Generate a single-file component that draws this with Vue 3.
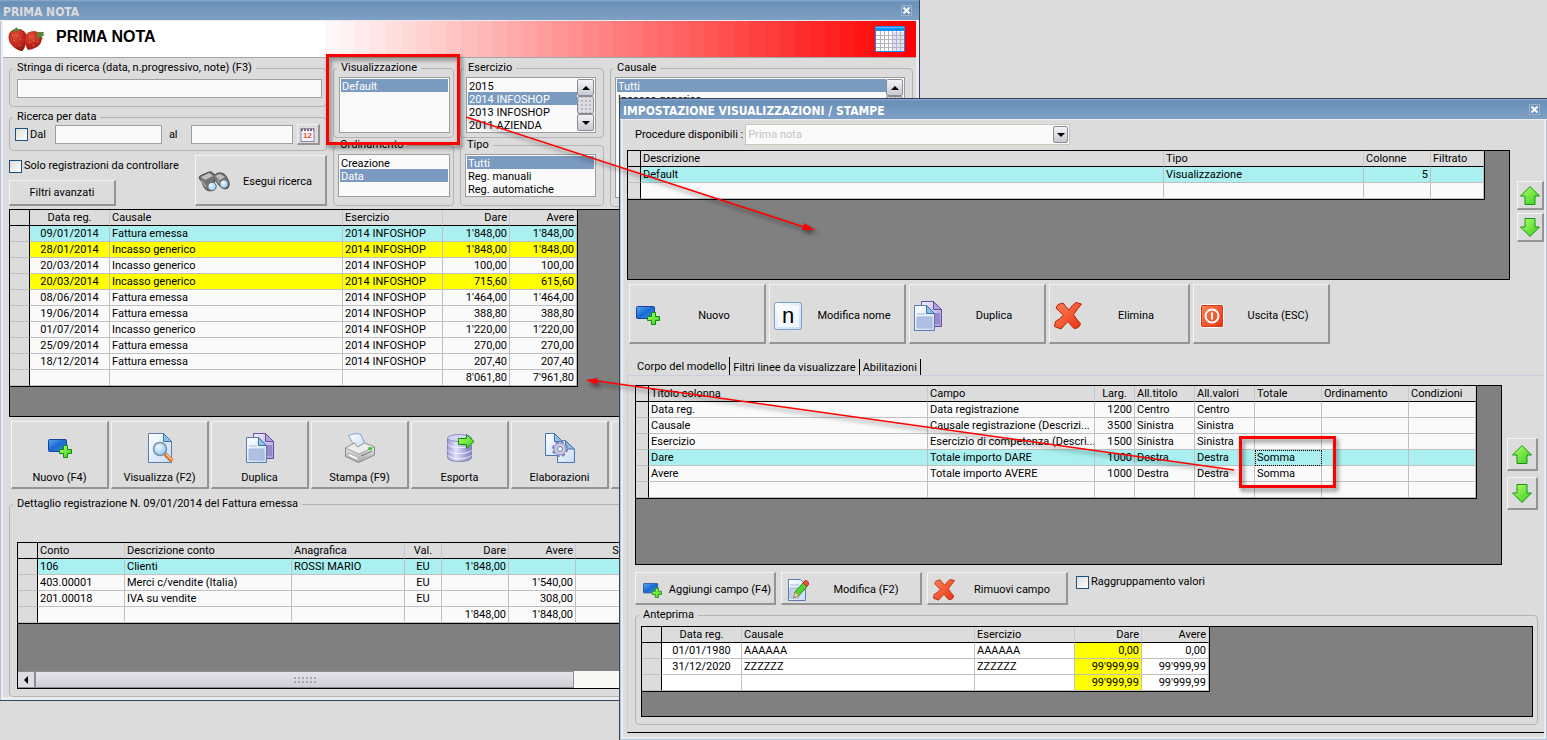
<template>
  <div class="desktop">
    <!-- shared icon definitions -->
    <svg class="defs" aria-hidden="true">
      <defs>
        <linearGradient id="gBlue" x1="0" y1="0" x2="1" y2="1">
          <stop offset="0" stop-color="#5aa8f0" />
          <stop offset="0.5" stop-color="#1a6ad0" />
          <stop offset="1" stop-color="#3a98f0" />
        </linearGradient>
        <linearGradient id="gGreen" x1="0" y1="0" x2="1" y2="1">
          <stop offset="0" stop-color="#b8ff6a" />
          <stop offset="1" stop-color="#34cc1c" />
        </linearGradient>
        <linearGradient id="gDoc" x1="0" y1="0" x2="1" y2="1">
          <stop offset="0" stop-color="#ffffff" />
          <stop offset="1" stop-color="#c4dcf4" />
        </linearGradient>
        <linearGradient id="gPurple" x1="0" y1="0" x2="1" y2="1">
          <stop offset="0" stop-color="#f4f0ff" />
          <stop offset="1" stop-color="#a898d8" />
        </linearGradient>
        <linearGradient id="gDb" x1="0" y1="0" x2="1" y2="0">
          <stop offset="0" stop-color="#9c9cd4" />
          <stop offset="0.35" stop-color="#e0e0fa" />
          <stop offset="1" stop-color="#7c7cbc" />
        </linearGradient>
        <linearGradient id="gRed" x1="0" y1="0" x2="1" y2="1">
          <stop offset="0" stop-color="#ff8458" />
          <stop offset="1" stop-color="#e83210" />
        </linearGradient>
        <linearGradient id="gGrey" x1="0" y1="0" x2="0" y2="1">
          <stop offset="0" stop-color="#f8f8f8" />
          <stop offset="1" stop-color="#a8a8a8" />
        </linearGradient>
        <radialGradient id="gLens" cx="0.4" cy="0.35" r="0.7">
          <stop offset="0" stop-color="#f0faff" />
          <stop offset="1" stop-color="#88c4f0" />
        </radialGradient>
        <radialGradient id="gBerry" cx="0.4" cy="0.3" r="0.8">
          <stop offset="0" stop-color="#e0503c" />
          <stop offset="0.6" stop-color="#bc2418" />
          <stop offset="1" stop-color="#84140c" />
        </radialGradient>
      </defs>
      <symbol id="new" viewBox="0 0 24 19">
        <rect x="0.5" y="0.5" width="18" height="12" rx="1" fill="url(#gBlue)" stroke="#1840a0" />
        <path d="M15.5 6.500h4v4h4v4h-4v4h-4v-4h-4v-4h4z" fill="url(#gGreen)" stroke="#0c8c0c" />
      </symbol>
      <symbol id="view" viewBox="0 0 30 30">
        <path d="M3.500 0.500h15l8 8v21h-23z" fill="url(#gDoc)" stroke="#5c7cb0" />
        <path d="M18.500 0.500v8h8z" fill="#8cc0e8" stroke="#4470a8" />
        <path d="M20 21l7 7" stroke="#d87020" stroke-width="4" />
        <path d="M21 21l6 6" stroke="#ffc080" stroke-width="1.500" />
        <circle cx="15" cy="16" r="6.500" fill="url(#gLens)" stroke="#7890a8" stroke-width="1.500" />
      </symbol>
      <symbol id="copy" viewBox="0 0 30 30">
        <path d="M8.500 0.500h12l8 8v17h-20z" fill="url(#gPurple)" stroke="#6450a0" />
        <path d="M20.500 0.500v8h8z" fill="#b0a0e0" stroke="#6450a0" />
        <path d="M20 12h7v11h-7z" fill="#9888c8" />
        <path d="M1.500 4.500h12l8 8v17h-20z" fill="url(#gDoc)" stroke="#5c7cb0" />
        <path d="M13.500 4.500v8h8z" fill="#8cc0e8" stroke="#4470a8" />
        <path d="M4 13h8M4 16h15v11h-15z" fill="#b0c0e4" stroke="#a4b8dc" />
      </symbol>
      <symbol id="print" viewBox="0 0 30 30">
        <path d="M3.500 2.500q7-3 12-1.500l4.500 10-9 5z" fill="url(#gDoc)" stroke="#7ca4d0" />
        <path d="M0.500 15l9-5 3 4 7-4 10 4v8l-16 7.500-13-6z" fill="url(#gGrey)" stroke="#888" />
        <path d="M0.500 15l9-5 3 4 7-4 10 4-15.500 7z" fill="#ececec" stroke="#a0a0a0" />
        <path d="M3 20l10 4.500v3l-10-4.500z" fill="#fff" stroke="#b0b0b0" />
        <path d="M16 23l11-5" stroke="#707070" />
        <ellipse cx="25" cy="15.500" rx="2" ry="1.500" fill="#28c828" />
      </symbol>
      <symbol id="db" viewBox="0 0 30 30">
        <path d="M2.500 5v19q0 4.500 12 4.500t12-4.500v-19z" fill="url(#gDb)" stroke="#8484b8" />
        <ellipse cx="14.500" cy="5" rx="12" ry="3.500" fill="#d4d4f0" stroke="#9090c4" />
        <path d="M2.500 11q2 3.500 12 3.500t12-3.500M2.500 17q2 3.500 12 3.500t12-3.500M2.500 22q2 3.500 12 3.500t12-3.500" fill="none" stroke="#f0f0ff" stroke-width="1" />
        <path d="M13.500 5.500h8v-4l7.500 7-7.500 7v-4h-8z" fill="url(#gGreen)" stroke="#108c10" />
      </symbol>
      <symbol id="gear" viewBox="0 0 30 30">
        <path d="M0.500 0.500h9l9 9v13h-18z" fill="url(#gDoc)" stroke="#4c74b0" />
        <path d="M12.500 18v11.500h17v-13l-9-9h-3z" fill="url(#gDoc)" stroke="#4c74b0" />
        <path d="M9.500 0.500v8h8zM20.500 8v8h9z" fill="#8cc0e8" stroke="#4470a8" />
        <circle cx="15" cy="16" r="6.500" fill="#c4c4e0" stroke="#8080ac" stroke-width="3" stroke-dasharray="3 2.100" />
        <circle cx="15" cy="16" r="6" fill="#c8c8e4" stroke="#9898c0" />
        <circle cx="15" cy="16" r="2.500" fill="#eef4ff" stroke="#7c7ca8" />
      </symbol>
      <symbol id="binoculars" viewBox="0 0 32 22">
        <path d="M1 7q0-2 3-3l7-3q2-1 5 2l1 1q3-3 6-2 3 0 5 3l3 6q1 3-1 6-3 2-6 0-4-3-5-6l-3-2q0 4 1 7-1 4-5 4-4 0-6-4-1-4-5-9z" fill="#747474" stroke="#484848" />
        <path d="M3 6l8-4 4 3-8 4zM17 5l5-2 5 3-5 3z" fill="#c0c0c0" />
        <path d="M3 9l5 7M19 8l3 5" stroke="#a0a0a0" stroke-width="1.500" />
        <circle cx="14" cy="15.500" r="4.200" fill="url(#gLens)" stroke="#606870" />
        <circle cx="26" cy="13" r="4.200" fill="url(#gLens)" stroke="#606870" />
      </symbol>
      <symbol id="rename" viewBox="0 0 28 28">
        <rect x="0.500" y="0.500" width="27" height="27" rx="2" fill="url(#gDoc)" stroke="#7c9cd0" />
        <rect x="4" y="4" width="21" height="21" fill="#fff" opacity="0.7" />
      </symbol>
      <symbol id="delete" viewBox="0 0 28 28">
        <path d="M4 2.500l5-1.500q3 4 6 7 3-5 7-7.500l5.500 1.500q-4 5-8 10.500 3 5 7 9-1 5-6.500 5-3-3-6-7-4 4-7 7.500l-6.500-2.500 1-5q4-2 8-6.500-5-4-7.500-7z" fill="url(#gRed)" stroke="#b82408" />
      </symbol>
      <symbol id="exit" viewBox="0 0 24 24">
        <rect x="0.500" y="0.500" width="23" height="23" rx="2" fill="url(#gRed)" stroke="#fff" />
        <rect x="1.500" y="1.500" width="21" height="21" rx="1" fill="none" stroke="#d83c18" />
        <circle cx="12" cy="12" r="6.500" fill="none" stroke="#fff" stroke-width="2" />
        <path d="M12 8.500v7" stroke="#fff" stroke-width="2" />
      </symbol>
      <symbol id="edit" viewBox="0 0 22 24">
        <path d="M1.500 1.500h12l5 5v16h-17z" fill="url(#gDoc)" stroke="#5c7cb0" />
        <path d="M3 7h9M3 10h9v10h-9z" fill="#c4d4ec" stroke="#a4b8dc" />
        <path d="M8 14l8-9 4 3.500-8 9-5 2z" fill="#54d42c" stroke="#1c8c14" />
        <path d="M16 5l2-2.500q4 0 3.500 4l-1.500 2z" fill="#e85038" stroke="#b83020" />
        <path d="M8 14l4 3.500-5.500 2.500z" fill="#f4d8a0" stroke="#a88850" />
      </symbol>
      <symbol id="up" viewBox="0 0 20 19">
        <path d="M10 0.500l9.500 9.500h-4.500v8.500h-10v-8.500h-4.500z" fill="url(#gGreen)" stroke="#149414" />
      </symbol>
      <symbol id="down" viewBox="0 0 20 19">
        <path d="M10 18.500l9.500-9.500h-4.500v-8.500h-10v8.500h-4.500z" fill="url(#gGreen)" stroke="#149414" />
      </symbol>
    </svg>

    <!-- main window -->
    <section class="window back">
      <header class="titlebar inactive">
        <h1>PRIMA NOTA</h1>
        <button class="close" aria-label="Chiudi">
          <svg width="7" height="7" viewBox="0 0 7 7"><path d="M0.500 0.500l6 6M6.500 0.500l-6 6" stroke="#fff" stroke-width="2" /></svg>
        </button>
      </header>

      <div class="banner">
        <div class="bands">
          <span v-for="n in 39" :key="n" :style="{ background: bandColor(n) }"></span>
        </div>
        <svg class="berry" width="38" height="25" viewBox="0 0 38 25">
          <path d="M0.500 10q0-7 8-8 10 0 10 8 0 9-4 14-5 0-10-5-4-4-4-9z" fill="url(#gBerry)" />
          <path d="M17 10q2-6 9-6 7 1 8 6 0 7-5 10-5 3-9 3-4-6-3-13z" fill="url(#gBerry)" />
          <path d="M4 3l3-1 1-2 2 2 4 0-2 2-3 0-3 1z" fill="#647c3c" />
          <path d="M29 5l3 0 4 0-1 2 2 1-3 1 1 3-3-2-2 2-1-3z" fill="#5c8434" />
          <path d="M4 8l1 1M9 8l1 1M6 13l1 1M12 12l1 1M11 18l1 1M21 9l1 1M25 13l1 1M21 15l1 1M25 18l1 1M29 14l1 1" stroke="#ec8468" />
        </svg>
        <h2>PRIMA NOTA</h2>
        <svg class="calendar" width="30" height="26" viewBox="0 0 30 26">
          <rect x="0.500" y="0.500" width="29" height="25" rx="1" fill="#fff" stroke="#0c8cf8" />
          <rect x="1" y="1" width="28" height="4" fill="#0c90f8" />
          <path d="M1 1.500h28" stroke="#68b8ff" />
          <path d="M18 6h11v19h-11z" fill="#d8d8fa" opacity="0.8" />
          <path d="M1 9.500h28M1 13.500h28M1 17.500h28M1 21.500h28M5.500 5v20M9.500 5v20M13.500 5v20M17.500 5v20M21.500 5v20M25.500 5v20" stroke="#b4b4c0" />
        </svg>
      </div>

      <div class="content">
        <div class="filters">
          <div class="search">
            <fieldset class="text-search">
              <legend><label for="stringa">Stringa di ricerca (data, n.progressivo, note) (F3)</label></legend>
              <input id="stringa" type="text" class="field" />
            </fieldset>
            <fieldset class="date-search">
              <legend>Ricerca per data</legend>
              <label class="check"><input type="checkbox" />Dal</label>
              <input type="text" class="field from" aria-label="Dal" />
              <label for="al">al</label>
              <input id="al" type="text" class="field to" />
              <button class="btn pick" aria-label="Calendario">
                <svg width="15" height="15" viewBox="0 0 15 15">
                  <rect x="1" y="1.500" width="13" height="13" fill="#f4f4ff" stroke="#8888b0" />
                  <path d="M1 3h13" stroke="#8c5c5c" stroke-width="2" stroke-dasharray="2 1" />
                  <text x="7.500" y="11" text-anchor="middle" font-family="Liberation Sans, sans-serif" font-weight="bold" font-size="8" fill="#f05008">12</text>
                </svg>
              </button>
            </fieldset>
            <div class="actions">
              <div class="extra">
                <label class="check"><input type="checkbox" />Solo registrazioni da controllare</label>
                <button class="btn advanced">Filtri avanzati</button>
              </div>
              <button class="btn side run">
                <span class="slot"><svg width="32" height="22"><use href="#binoculars" /></svg></span>
                <span class="label">Esegui ricerca</span>
              </button>
            </div>
          </div>

          <div class="stack">
            <fieldset class="upper">
              <legend>Visualizzazione</legend>
              <div class="list">
                <select size="4" aria-label="Visualizzazione"><option selected>Default</option></select>
              </div>
            </fieldset>
            <fieldset class="lower">
              <legend>Ordinamento</legend>
              <div class="list">
                <select size="3" aria-label="Ordinamento">
                  <option>Creazione</option>
                  <option selected>Data</option>
                </select>
              </div>
            </fieldset>
          </div>

          <div class="stack">
            <fieldset class="upper wide">
              <legend>Esercizio</legend>
              <div class="list">
                <select size="4" aria-label="Esercizio">
                  <option v-for="e in esercizi" :key="e" :selected="e === '2014 INFOSHOP'">{{ e }}</option>
                </select>
                <div class="scroll">
                  <button aria-label="Su"><i class="tri up"></i></button>
                  <span class="thumb"></span>
                  <button aria-label="Giù"><i class="tri down"></i></button>
                </div>
              </div>
            </fieldset>
            <fieldset class="lower wide">
              <legend>Tipo</legend>
              <div class="list">
                <select size="3" aria-label="Tipo">
                  <option selected>Tutti</option>
                  <option>Reg. manuali</option>
                  <option>Reg. automatiche</option>
                </select>
              </div>
            </fieldset>
          </div>

          <fieldset class="lower wide">
            <legend>Causale</legend>
            <div class="list">
              <select size="9" aria-label="Causale">
                <option selected>Tutti</option>
                <option>Incasso generico</option>
              </select>
              <div class="scroll">
                <button aria-label="Su"><i class="tri up"></i></button>
                <span class="thumb"></span>
                <button aria-label="Giù"><i class="tri down"></i></button>
              </div>
            </div>
          </fieldset>
        </div>

        <div class="grid-box main-box">
          <table :style="{ width: tableWidth(mainCols) }">
            <colgroup><col v-for="(c, i) in mainCols" :key="i" :style="{ width: c.w + 'px' }" /></colgroup>
            <thead>
              <tr><th v-for="(c, i) in mainCols" :key="i" :class="c.a">{{ c.t }}</th></tr>
            </thead>
            <tbody>
              <tr v-for="(r, i) in registrazioni" :key="i" :class="r[0]">
                <td v-for="(c, j) in mainCols" :key="j" :class="c.a">{{ j ? r[j] : '' }}</td>
              </tr>
            </tbody>
          </table>
        </div>

        <div class="toolbar">
          <button v-for="b in toolbar" :key="b.label" class="btn tool">
            <span class="picture"><svg :width="b.w" :height="b.h"><use :href="'#' + b.icon" /></svg></span>
            <span>{{ b.label }}</span>
          </button>
          <button class="btn tool" aria-label="Uscita"></button>
        </div>

        <fieldset class="detail">
          <legend>Dettaglio registrazione N. 09/01/2014 del Fattura emessa</legend>
          <div class="grid-box detail-box">
            <table :style="{ width: tableWidth(detailCols) }">
              <colgroup><col v-for="(c, i) in detailCols" :key="i" :style="{ width: c.w + 'px' }" /></colgroup>
              <thead>
                <tr><th v-for="(c, i) in detailCols" :key="i" :class="c.a">{{ c.t }}</th></tr>
              </thead>
              <tbody>
                <tr v-for="(r, i) in dettaglio" :key="i" :class="r[0]">
                  <td v-for="(c, j) in detailCols" :key="j" :class="c.a">{{ j ? r[j] : '' }}</td>
                </tr>
              </tbody>
            </table>
            <div class="hscroll">
              <button aria-label="Sinistra"><i class="tri left"></i></button>
              <span class="bar"><i class="grip"></i></span>
            </div>
          </div>
        </fieldset>
      </div>
    </section>

    <!-- settings window -->
    <section class="window front">
      <header class="titlebar">
        <h1>IMPOSTAZIONE VISUALIZZAZIONI / STAMPE</h1>
        <button class="close" aria-label="Chiudi">
          <svg width="7" height="7" viewBox="0 0 7 7"><path d="M0.500 0.500l6 6M6.500 0.500l-6 6" stroke="#fff" stroke-width="2" /></svg>
        </button>
      </header>

      <div class="content">
        <div class="procedure">
          <label for="procedure">Procedure disponibili :</label>
          <div class="combo">
            <select id="procedure" disabled><option>Prima nota</option></select>
            <span class="arrow"><i class="tri down"></i></span>
          </div>
        </div>

        <div class="with-side top-grid">
          <div class="grid-box">
            <table :style="{ width: tableWidth(viewCols) }">
              <colgroup><col v-for="(c, i) in viewCols" :key="i" :style="{ width: c.w + 'px' }" /></colgroup>
              <thead>
                <tr><th v-for="(c, i) in viewCols" :key="i" :class="c.a">{{ c.t }}</th></tr>
              </thead>
              <tbody>
                <tr v-for="(r, i) in viste" :key="i" :class="r[0]">
                  <td v-for="(c, j) in viewCols" :key="j" :class="c.a">{{ j ? r[j] : '' }}</td>
                </tr>
              </tbody>
            </table>
          </div>
          <div class="movers">
            <button class="btn" aria-label="Sposta su"><svg width="20" height="19"><use href="#up" /></svg></button>
            <button class="btn" aria-label="Sposta giù"><svg width="20" height="19"><use href="#down" /></svg></button>
          </div>
        </div>

        <div class="commands">
          <button v-for="b in commands" :key="b.label" class="btn side" :class="{ long: b.icon === 'delete' }">
            <span class="slot">
              <svg :width="b.w" :height="b.h">
                <use :href="'#' + b.icon" />
                <text v-if="b.icon === 'rename'" class="letter" x="14" y="21" text-anchor="middle">n</text>
              </svg>
            </span>
            <span class="label">{{ b.label }}</span>
          </button>
        </div>

        <div class="tabs" role="tablist">
          <button role="tab" aria-selected="true" class="active">Corpo del modello</button>
          <button role="tab" aria-selected="false">Filtri linee da visualizzare</button>
          <button role="tab" aria-selected="false">Abilitazioni</button>
        </div>

        <div class="panel">
          <div class="with-side model-grid">
            <div class="grid-box">
              <table :style="{ width: tableWidth(modelCols) }">
                <colgroup><col v-for="(c, i) in modelCols" :key="i" :style="{ width: c.w + 'px' }" /></colgroup>
                <thead>
                  <tr><th v-for="(c, i) in modelCols" :key="i" :class="c.a">{{ c.t }}</th></tr>
                </thead>
                <tbody>
                  <tr v-for="(r, i) in modello" :key="i" :class="r[0]">
                    <td v-for="(c, j) in modelCols" :key="j" :class="[c.a, { focus: i === 3 && j === 6 }]">{{ j ? r[j] : '' }}</td>
                  </tr>
                </tbody>
              </table>
            </div>
            <div class="movers">
              <button class="btn" aria-label="Sposta su"><svg width="20" height="19"><use href="#up" /></svg></button>
              <button class="btn" aria-label="Sposta giù"><svg width="20" height="19"><use href="#down" /></svg></button>
            </div>
          </div>

          <div class="field-actions">
            <button v-for="b in fieldActions" :key="b.label" class="btn side small">
              <span class="slot"><svg :width="b.w" :height="b.h"><use :href="'#' + b.icon" /></svg></span>
              <span class="label">{{ b.label }}</span>
            </button>
            <label class="check group-check"><input type="checkbox" />Raggruppamento valori</label>
          </div>

          <fieldset class="preview">
            <legend>Anteprima</legend>
            <div class="grid-box">
              <table :style="{ width: tableWidth(mainCols) }">
                <colgroup><col v-for="(c, i) in mainCols" :key="i" :style="{ width: c.w + 'px' }" /></colgroup>
                <thead>
                  <tr><th v-for="(c, i) in mainCols" :key="i" :class="c.a">{{ c.t }}</th></tr>
                </thead>
                <tbody>
                  <tr v-for="(r, i) in anteprima" :key="i">
                    <td v-for="(c, j) in mainCols" :key="j" :class="[c.a, { mark: j === 4 }]">{{ j ? r[j] : '' }}</td>
                  </tr>
                </tbody>
              </table>
            </div>
          </fieldset>
        </div>
      </div>
    </section>

    <!-- callouts -->
    <svg class="callouts" aria-hidden="true">
      <g fill="none" stroke="#ff0000">
        <rect x="327.500" y="55.500" width="131" height="88" stroke-width="3" />
        <rect x="1240.500" y="437.500" width="94" height="49" stroke-width="3" />
        <path d="M466 117L804 227" stroke-width="1.500" />
        <path d="M1234 470L597 381" stroke-width="1.500" />
      </g>
      <path d="M815 230l-10.500-7-2.500 7z" fill="#ff0000" />
      <path d="M586 380l11.500-2-1 7z" fill="#ff0000" />
    </svg>
  </div>
</template>

<script setup>
const esercizi = ['2015', '2014 INFOSHOP', '2013 INFOSHOP', '2011 AZIENDA']

// t = title, w = width, a = alignment
const mainCols = [
  { t: '', w: 20 },
  { t: 'Data reg.', w: 80, a: 'center' },
  { t: 'Causale', w: 233 },
  { t: 'Esercizio', w: 100 },
  { t: 'Dare', w: 67, a: 'right' },
  { t: 'Avere', w: 67, a: 'right' }
]

// first item of each row is its css class
const registrazioni = [
  ['current', '09/01/2014', 'Fattura emessa', '2014 INFOSHOP', "1'848,00", "1'848,00"],
  ['warn', '28/01/2014', 'Incasso generico', '2014 INFOSHOP', "1'848,00", "1'848,00"],
  ['', '20/03/2014', 'Incasso generico', '2014 INFOSHOP', '100,00', '100,00'],
  ['warn', '20/03/2014', 'Incasso generico', '2014 INFOSHOP', '715,60', '615,60'],
  ['', '08/06/2014', 'Fattura emessa', '2014 INFOSHOP', "1'464,00", "1'464,00"],
  ['', '19/06/2014', 'Fattura emessa', '2014 INFOSHOP', '388,80', '388,80'],
  ['', '01/07/2014', 'Incasso generico', '2014 INFOSHOP', "1'220,00", "1'220,00"],
  ['', '25/09/2014', 'Fattura emessa', '2014 INFOSHOP', '270,00', '270,00'],
  ['', '18/12/2014', 'Fattura emessa', '2014 INFOSHOP', '207,40', '207,40'],
  ['', '', '', '', "8'061,80", "7'961,80"]
]

const toolbar = [
  { label: 'Nuovo (F4)', icon: 'new', w: 24, h: 19 },
  { label: 'Visualizza (F2)', icon: 'view', w: 30, h: 30 },
  { label: 'Duplica', icon: 'copy', w: 30, h: 30 },
  { label: 'Stampa (F9)', icon: 'print', w: 30, h: 30 },
  { label: 'Esporta', icon: 'db', w: 30, h: 30 },
  { label: 'Elaborazioni', icon: 'gear', w: 30, h: 30 }
]

const detailCols = [
  { t: '', w: 20 },
  { t: 'Conto', w: 87 },
  { t: 'Descrizione conto', w: 167 },
  { t: 'Anagrafica', w: 113 },
  { t: 'Val.', w: 37, a: 'center' },
  { t: 'Dare', w: 67, a: 'right' },
  { t: 'Avere', w: 67, a: 'right' },
  { t: 'Saldo', w: 67, a: 'right' }
]

const dettaglio = [
  ['current', '106', 'Clienti', 'ROSSI MARIO', 'EU', "1'848,00", '', '0,00'],
  ['', '403.00001', 'Merci c/vendite (Italia)', '', 'EU', '', "1'540,00", ''],
  ['', '201.00018', 'IVA su vendite', '', 'EU', '', '308,00', ''],
  ['', '', '', '', '', "1'848,00", "1'848,00", '']
]

const viewCols = [
  { t: '', w: 13 },
  { t: 'Descrizione', w: 523 },
  { t: 'Tipo', w: 200 },
  { t: 'Colonne', w: 67, a: 'number' },
  { t: 'Filtrato', w: 53 }
]

const viste = [
  ['current', 'Default', 'Visualizzazione', '5', ''],
  ['', '', '', '', '']
]

const commands = [
  { label: 'Nuovo', icon: 'new', w: 24, h: 19 },
  { label: 'Modifica nome', icon: 'rename', w: 28, h: 28 },
  { label: 'Duplica', icon: 'copy', w: 30, h: 30 },
  { label: 'Elimina', icon: 'delete', w: 28, h: 28 },
  { label: 'Uscita (ESC)', icon: 'exit', w: 24, h: 24 }
]

const modelCols = [
  { t: '', w: 13 },
  { t: 'Titolo colonna', w: 279 },
  { t: 'Campo', w: 167 },
  { t: 'Larg.', w: 40, a: 'number mid' },
  { t: 'All.titolo', w: 60 },
  { t: 'All.valori', w: 60 },
  { t: 'Totale', w: 67 },
  { t: 'Ordinamento', w: 87 },
  { t: 'Condizioni', w: 67 }
]

const modello = [
  ['', 'Data reg.', 'Data registrazione', '1200', 'Centro', 'Centro', '', '', ''],
  ['', 'Causale', 'Causale registrazione (Descrizi...', '3500', 'Sinistra', 'Sinistra', '', '', ''],
  ['', 'Esercizio', 'Esercizio di competenza (Descri...', '1500', 'Sinistra', 'Sinistra', '', '', ''],
  ['current', 'Dare', 'Totale importo DARE', '1000', 'Destra', 'Destra', 'Somma', '', ''],
  ['', 'Avere', 'Totale importo AVERE', '1000', 'Destra', 'Destra', 'Somma', '', ''],
  ['', '', '', '', '', '', '', '', '']
]

const fieldActions = [
  { label: 'Aggiungi campo (F4)', icon: 'new', w: 19, h: 15 },
  { label: 'Modifica (F2)', icon: 'edit', w: 22, h: 24 },
  { label: 'Rimuovi campo', icon: 'delete', w: 22, h: 22 }
]

const anteprima = [
  ['', '01/01/1980', 'AAAAAA', 'AAAAAA', '0,00', '0,00'],
  ['', '31/12/2020', 'ZZZZZZ', 'ZZZZZZ', "99'999,99", "99'999,99"],
  ['', '', '', '', "99'999,99", "99'999,99"]
]

const tableWidth = (cols) => cols.reduce((sum, c) => sum + c.w, 1) + 'px'

// white to red in hard steps
const bandColor = (n) => {
  const v = Math.round(255 - (n / 39) * 255)
  return `rgb(255, ${v}, ${v})`
}
</script>

<style>
body {
  margin: 0;
  background: #dcdcdc;
}
</style>

<style scoped>
.desktop {
  position: relative;
  min-height: 100vh;
  overflow: hidden;
  background: #dcdcdc;
  color: #000;
  font-family: Roboto, sans-serif;
  font-size: 11px;
  line-height: 14px;
}

.desktop * {
  box-sizing: border-box;
}

button,
input,
select {
  margin: 0;
  color: inherit;
  font: inherit;
}

svg {
  display: block;
  flex: none;
}

.defs {
  position: absolute;
  width: 0;
  height: 0;
}

/* windows */
.window {
  position: absolute;
  background: #dcdcdc;
}

.back {
  top: 0;
  left: 0;
  width: 920px;
  border: solid #34465c;
  border-width: 0 1px 1px 0;
  box-shadow: inset 1px 0 #b0c4dc, inset -3px -3px #ececf0, inset 3px 0 #ececf0;
}

.front {
  top: 98px;
  left: 619px;
  right: 0;
  border: solid #34465c;
  border-width: 1px 0 0 1px;
  box-shadow: inset 1px 0 #b0c4dc, inset -1px -1px #b0c4dc, inset 3px 0 #ececf0, inset -3px -3px #ececf0;
}

.titlebar {
  display: flex;
  align-items: center;
  justify-content: space-between;
  height: 21px;
  padding: 4px 7px 0 3px;
  background: linear-gradient(#8cacd0 0, #6a90b8 2px, #7fa0c4 100%);
  border-bottom: 1px solid #ececf0;
  color: #fff;
}

.titlebar h1 {
  margin: 0;
  font-family: "DejaVu Sans Condensed", "DejaVu Sans", sans-serif;
  font-size: 12px;
  line-height: 16px;
  font-weight: bold;
}

.titlebar.inactive {
  color: #dcdcdc;
}

.close {
  display: flex;
  align-items: center;
  justify-content: center;
  width: 11px;
  height: 11px;
  margin-bottom: 3px;
  padding: 0;
  border: 1px solid #98b2d0;
  background: #7092b8;
}

.banner {
  position: relative;
  display: flex;
  align-items: center;
  height: 37px;
  margin: 0 3px;
  padding: 0 11px 0 5px;
  background: #fff;
  border-bottom: 1px solid #a4a4a4;
}

.banner h2 {
  flex: 1;
  margin: 0 0 4px 10px;
  font-family: "Liberation Sans", sans-serif;
  font-size: 16px;
  line-height: 22px;
  font-weight: bold;
}

.banner svg,
.banner h2 {
  z-index: 1;
}

.bands {
  position: absolute;
  inset: 0 0 0 322px;
  display: flex;
}

.bands span {
  flex: 1;
}

/* group boxes */
fieldset {
  min-width: 0;
  margin: 0;
  border: 1px solid #b4b4b4;
  border-radius: 4px;
}

legend {
  margin-left: -2px;
  padding: 0 4px;
  height: 14px;
}

.back .content {
  padding: 3px 6px 3px 9px;
}

.filters {
  display: grid;
  grid-template-columns: 318px 121px 144px 1fr;
  gap: 6px;
}

.search,
.stack {
  display: flex;
  flex-direction: column;
}

.text-search {
  padding: 4px 4px 8px 7px;
}

.text-search legend,
.detail legend {
  margin-left: -4px;
}

.field {
  width: 100%;
  height: 19px;
  padding: 0 3px;
  border: 1px solid #a0a0a0;
  background: #fafafa;
}

.text-search .field {
  display: block;
}

.date-search {
  display: flex;
  align-items: center;
  margin-top: 3px;
  padding: 0 6px 5px 5px;
}

.date-search .from {
  width: 107px;
  margin: 0 7px 0 9px;
}

.date-search .to {
  width: 102px;
  margin: 0 4px 0 13px;
}

.check {
  display: flex;
  align-items: center;
  gap: 2px;
}

.check input {
  appearance: none;
  width: 13px;
  height: 13px;
  border: 1px solid #1c5180;
  background: linear-gradient(135deg, #dcdcd8, #fff);
}

.btn {
  display: flex;
  align-items: center;
  justify-content: center;
  padding: 0;
  border: solid;
  border-width: 1px 2px 2px 1px;
  border-color: #f4f4f4 #949494 #949494 #f4f4f4;
  background: #dcdcdc;
}

.pick {
  width: 23px;
  height: 21px;
}

.actions {
  display: flex;
  justify-content: space-between;
  margin-top: 4px;
}

.extra {
  display: flex;
  flex-direction: column;
  justify-content: space-between;
  padding-top: 4px;
}

.advanced {
  width: 107px;
  height: 26px;
}

.side {
  justify-content: flex-start;
  width: 137px;
  height: 60px;
  padding: 4px 0 0 2px;
}

.slot {
  display: flex;
  flex: none;
  justify-content: center;
  width: 32px;
}

.label {
  flex: 1;
  text-align: center;
}

.letter {
  font-family: "Liberation Sans", sans-serif;
  font-size: 22px;
}

.run {
  width: 132px;
  height: 51px;
}

.upper {
  padding: 2px 3px 4px 5px;
}

.lower {
  display: flex;
  padding: 2px 3px 8px 4px;
}

.wide {
  padding-right: 7px;
}

.list {
  display: flex;
  flex: 1;
  border: 1px solid #9c9c9c;
  background: #fafafa;
  padding: 1px;
}

.upper .list {
  height: 56px;
}

.stack .lower .list {
  height: 43px;
}

.list select {
  flex: 1;
  min-width: 0;
  height: 100%;
  padding: 0;
  border: 0;
  border-radius: 0;
  outline: 0;
  background: transparent;
  overflow: hidden;
  scrollbar-width: none;
}

.list option {
  height: 13px;
  min-height: 13px;
  padding: 1px 1px 0;
  line-height: 13px;
}

.list option:checked {
  background: #7a9abf linear-gradient(#7a9abf, #7a9abf);
  color: #fff;
  -webkit-text-fill-color: #fff;
}

.scroll {
  display: flex;
  flex-direction: column;
  justify-content: space-between;
  width: 17px;
}

.scroll button,
.scroll .thumb,
.combo .arrow {
  display: flex;
  align-items: center;
  justify-content: center;
  height: 17px;
  padding: 0;
  border: 1px solid #8c8c94;
  border-radius: 2px;
  background: linear-gradient(#f4f4f8, #c8c8d0);
}

.scroll .thumb {
  flex: 1;
  height: auto;
  background: radial-gradient(circle, #b8b8c0 1px, #dcdce2 1px) 2px 2px / 4px 4px;
}

.tri {
  width: 0;
  height: 0;
  border: 4px solid transparent;
}

.tri.up {
  border-top: 0;
  border-bottom-color: #000;
}

.tri.down {
  border-bottom: 0;
  border-top-color: #000;
}

.tri.left {
  border-left: 0;
  border-right-color: #000;
}

/* data grids */
.grid-box {
  min-width: 0;
  overflow: hidden;
  border: 1px solid #000;
  background: #808080;
}

.main-box {
  height: 208px;
  margin-top: 2px;
}

table {
  table-layout: fixed;
  border-spacing: 0;
  border: solid #000;
  border-width: 0 1px 1px 0;
}

th,
td {
  height: 16px;
  padding: 1px 2px 0;
  overflow: hidden;
  border: solid #c0c0c0;
  border-width: 0 1px 1px 0;
  background: #fafafa;
  font-weight: normal;
  line-height: 14px;
  text-align: left;
  white-space: nowrap;
}

th {
  border-color: #c8c8d4;
  border-bottom-color: #000;
  background: #dcdcdc;
}

td:first-child,
th:first-child {
  border-right-color: #000;
  background: #dcdcdc;
}

.current td:not(:first-child) {
  background: #aaf0f0;
}

.warn td:not(:first-child),
td.mark {
  background: #ffff00;
}

.center,
th.mid {
  text-align: center;
}

.right,
td.number {
  text-align: right;
}

.focus {
  outline: 1px dotted #000;
  outline-offset: -1px;
}

.toolbar {
  display: flex;
  gap: 2px;
  margin: 4px 0 8px;
  padding-left: 2px;
}

.tool {
  flex: none;
  flex-direction: column;
  justify-content: flex-start;
  gap: 6px;
  width: 98px;
  height: 68px;
  padding-top: 9px;
}

.picture {
  display: flex;
  align-items: center;
  height: 34px;
}

.detail {
  padding: 31px 0 7px 7px;
}

.detail-box {
  display: flex;
  flex-direction: column;
  justify-content: space-between;
  height: 147px;
  margin-right: 7px;
}

.hscroll {
  display: flex;
  height: 17px;
  background: #f8f8f4;
}

.hscroll button {
  display: flex;
  align-items: center;
  justify-content: center;
  width: 17px;
  padding: 0;
  border: 1px solid #8c8c94;
  border-left: 0;
  background: #dcdce2;
}

.bar {
  display: flex;
  align-items: center;
  justify-content: center;
  width: 539px;
  border: 1px solid #8c8c94;
  background: linear-gradient(#e4e4ea, #cfcfd6);
}

.grip {
  width: 24px;
  height: 8px;
  background: radial-gradient(circle, #a8a8b0 1px, transparent 1px) 0 0 / 4px 4px;
}

/* settings window */
.front .content {
  padding: 4px 3px 7px 7px;
}

.procedure {
  display: flex;
  align-items: center;
  gap: 2px;
  margin-bottom: 5px;
  padding-left: 8px;
}

.combo {
  display: flex;
  align-items: center;
  width: 325px;
  height: 21px;
  padding-right: 1px;
  border: 1px solid #c8c8b8;
  background: #fafafa;
}

.combo select {
  appearance: none;
  flex: 1;
  padding: 0 2px;
  border: 0;
  background: transparent;
  color: #c4c4c4;
  opacity: 1;
}

.combo .arrow {
  width: 15px;
}

.with-side {
  display: grid;
  grid-template-columns: 1fr 27px;
  gap: 7px;
}

.top-grid {
  height: 130px;
}

.movers {
  display: flex;
  flex-direction: column;
  gap: 3px;
  padding-top: 31px;
}

.movers .btn {
  height: 29px;
}

.commands {
  display: flex;
  gap: 3px;
  margin: 4px 0 13px;
  padding-left: 2px;
}

.long {
  width: 141px;
}

.tabs {
  display: flex;
  align-items: flex-end;
  height: 18px;
}

.tabs button {
  height: 16px;
  padding: 1px 3px 0;
  border: solid #000;
  border-width: 0 1px 0 0;
  background: transparent;
}

.tabs .active {
  height: 18px;
  padding: 1px 3px 0 9px;
  border-left: 1px solid #d0d0d8;
}

.panel {
  padding: 9px 6px 7px 7px;
  border: solid #cccce0;
  border-width: 1px 0 1px 1px;
  border-bottom-color: #000;
}

.model-grid {
  grid-template-columns: 1fr 31px;
  gap: 5px;
  height: 180px;
}

.model-grid .movers {
  gap: 6px;
  padding-top: 53px;
}

.model-grid .btn {
  height: 33px;
}

.field-actions {
  display: flex;
  align-items: flex-start;
  gap: 5px;
  margin: 7px 0 3px;
}

.small {
  width: 141px;
  height: 33px;
}

.small .slot {
  width: 28px;
}

.group-check {
  margin: 3px 0 0 3px;
}

.preview {
  padding: 4px 4px 7px 5px;
}

.preview .grid-box {
  height: 91px;
}

.preview td:not(:first-child):not(.mark) {
  background: #fff;
}

.callouts {
  position: absolute;
  inset: 0;
  width: 100%;
  height: 100%;
  pointer-events: none;
  filter: drop-shadow(2px 3px 2px rgba(0, 0, 0, 0.5));
}
</style>
